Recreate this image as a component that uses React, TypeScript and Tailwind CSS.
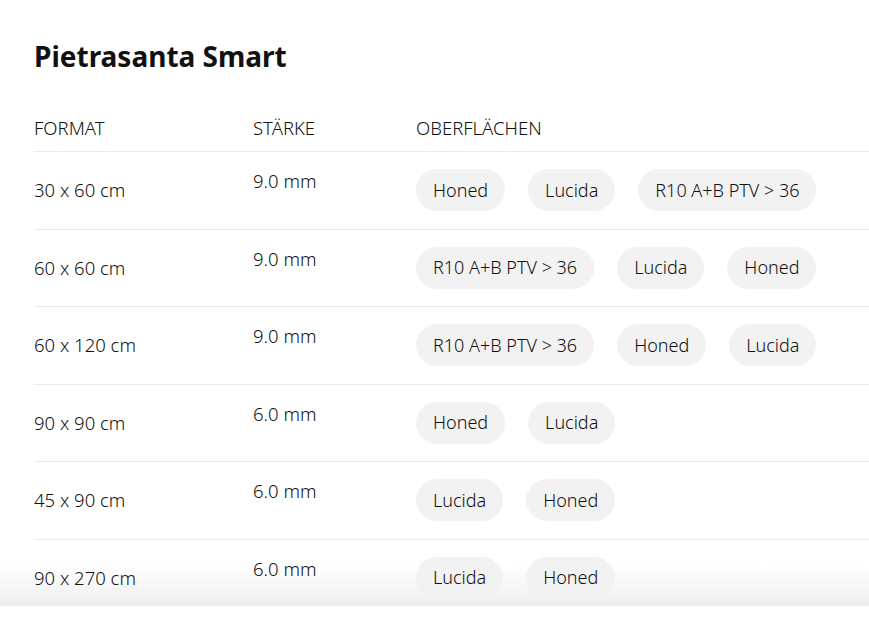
import React from "react";

const rows: { format: string; staerke: string; chips: string[] }[] = [
  { format: "30 x 60 cm", staerke: "9.0 mm", chips: ["Honed", "Lucida", "R10 A+B PTV > 36"] },
  { format: "60 x 60 cm", staerke: "9.0 mm", chips: ["R10 A+B PTV > 36", "Lucida", "Honed"] },
  { format: "60 x 120 cm", staerke: "9.0 mm", chips: ["R10 A+B PTV > 36", "Honed", "Lucida"] },
  { format: "90 x 90 cm", staerke: "6.0 mm", chips: ["Honed", "Lucida"] },
  { format: "45 x 90 cm", staerke: "6.0 mm", chips: ["Lucida", "Honed"] },
  { format: "90 x 270 cm", staerke: "6.0 mm", chips: ["Lucida", "Honed"] },
];

export default function App() {
  return (
    <div
      className="w-[869px] h-[620px] bg-white text-[#111] overflow-hidden"
      style={{ fontFamily: '"Noto Sans", "Open Sans", sans-serif' }}
    >
      <div className="h-[606px] overflow-hidden bg-[linear-gradient(to_bottom,#ffffff_calc(100%-42px),#eeeeee)]">
        <div className="pl-[34px] pt-[36px]">
          <h1 className="text-[28px] leading-[40px] font-bold">Pietrasanta Smart</h1>
          <div className="mt-[37px] flex items-center h-[39px] border-b border-[#ebebeb] text-[18.5px] font-[350] pb-[8px]">
            <div className="w-[219px]">FORMAT</div>
            <div className="w-[163px]">STÄRKE</div>
            <div>OBERFLÄCHEN</div>
          </div>
          {rows.map((r, i) => (
            <div
              key={i}
              className="flex items-center py-[17.25px] border-b border-[#ebebeb] text-[18.5px] font-[350]"
            >
              <div className="w-[219px] shrink-0">{r.format}</div>
              <div className="w-[163px] shrink-0 self-start leading-6">{r.staerke}</div>
              <div className="flex gap-[23px]">
                {r.chips.map((c, j) => (
                  <span
                    key={j}
                    className="h-[42px] px-[17px] rounded-full bg-[#f2f2f2] flex items-center whitespace-nowrap text-[18px]"
                  >
                    {c}
                  </span>
                ))}
              </div>
            </div>
          ))}
        </div>
      </div>
    </div>
  );
}
